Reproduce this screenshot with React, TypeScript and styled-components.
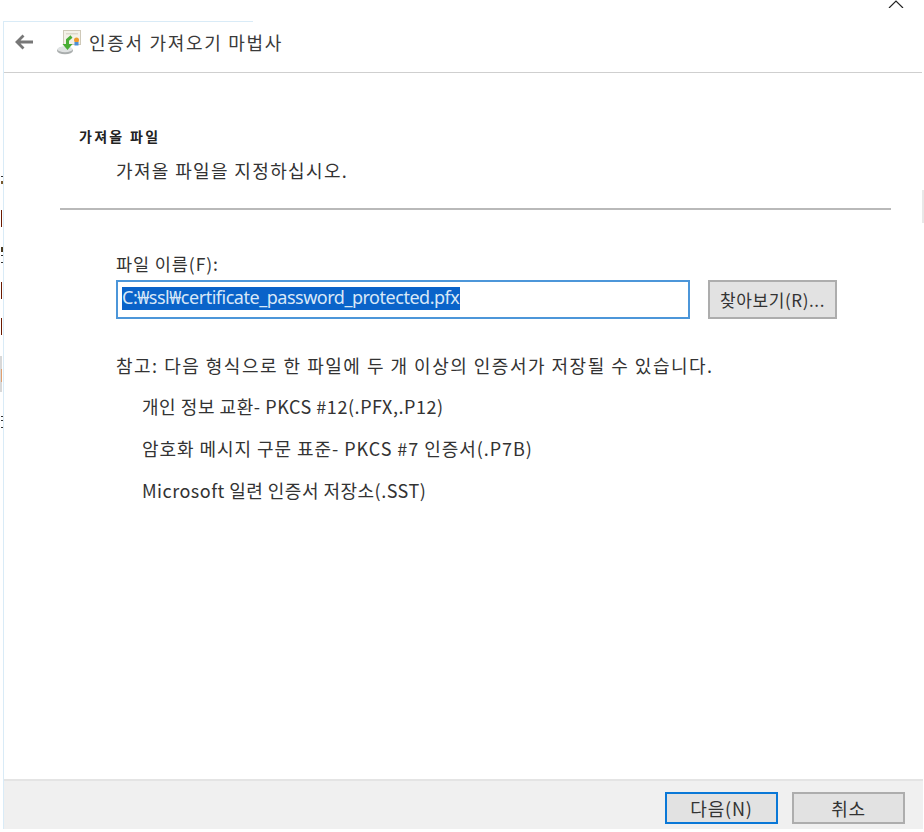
import React from 'react';
import styled, { createGlobalStyle } from 'styled-components';

const GlobalStyle = createGlobalStyle`
	html, body {
		margin: 0;
		padding: 0;
		background: #ffffff;
	}
	body {
		font-family: "Noto Sans CJK KR", "Noto Sans", sans-serif;
		color: #333333;
	}
`;

const Screen = styled.div`
	position: relative;
	width: 924px;
	height: 832px;
	overflow: hidden;
	background: #fff;
`;

const Wizard = styled.div`
	display: flex;
	flex-direction: column;
	width: 918px;
	height: 808px;
	margin: 21px 0 0 3px;
	border-left: 1px solid #d9ebf7;
`;

const TopEdge = styled.div`
	width: 249px;
	height: 1px;
	background: #d9ebf7;
`;

const Header = styled.header`
	display: flex;
	align-items: center;
	flex-shrink: 0;
	height: 40px;
	padding: 0 0 10px 10px;
	border-bottom: 1px solid #cfcfcf;
`;

const BackButton = styled.span`
	display: flex;
	width: 22px;
	height: 18px;
	margin-right: 21px;
`;

const WizardIcon = styled.span`
	display: flex;
	width: 26px;
	height: 26px;
	margin-right: 6px;
`;

const Title = styled.h1`
	margin: 0;
	font-size: 18px;
	font-weight: 400;
	letter-spacing: 1.7px;
	color: #3a3a3a;
`;

const Body = styled.main`
	flex: 1;
	padding: 53px 31px 0 56px;
`;

const SectionTitle = styled.h2`
	margin: 0 0 0 19px;
	font-size: 14px;
	line-height: 20px;
	font-weight: 700;
	letter-spacing: 2.3px;
	color: #222;
`;

const SectionHint = styled.p`
	margin: 12px 0 0 56px;
	font-size: 18px;
	line-height: 24px;
	letter-spacing: 1.36px;
`;

const Divider = styled.hr`
	height: 2px;
	margin: 26px 0 0;
	border: 0;
	background: #b9b9b9;
`;

const FieldLabel = styled.label`
	display: block;
	margin: 43px 0 0 56px;
	font-size: 17.5px;
	line-height: 22px;
	letter-spacing: 0.9px;
`;

const FieldRow = styled.div`
	display: flex;
	align-items: flex-start;
	gap: 18px;
	margin: 5px 0 0 56px;
`;

const PathField = styled.div`
	box-sizing: border-box;
	width: 574px;
	height: 39px;
	padding: 3px 4px;
	border: 2px solid #4c96d9;
`;

const SelectedPath = styled.span`
	display: inline-block;
	height: 23px;
	padding: 0 1px 0 0;
	font-family: "Noto Sans", "Noto Sans CJK KR", sans-serif;
	font-size: 18px;
	line-height: 21px;
	letter-spacing: -0.48px;
	color: #d8e8f8;
	background: #0a63c9;
`;

const DialogButton = styled.button<{ $focused?: boolean }>`
	box-sizing: border-box;
	height: 39px;
	padding: 0;
	font-family: inherit;
	font-size: 17px;
	color: #333;
	background: #e2e2e2;
	border: 2px solid ${(p) => (p.$focused ? '#0a78d7' : '#adadad')};
`;

const BrowseButton = styled(DialogButton)`
	width: 129px;
	letter-spacing: 0.6px;
`;

const Note = styled.p`
	margin: 34px 0 0 56px;
	font-size: 18px;
	line-height: 24px;
	letter-spacing: 1.5px;
`;

const FormatList = styled.ul`
	margin: 8px 0 0 82px;
	padding: 0;
	list-style: none;
`;

const FormatItem = styled.li<{ $spacing: number }>`
	height: 42px;
	font-size: 18px;
	line-height: 42px;
	letter-spacing: ${(p) => p.$spacing}px;
`;

const Footer = styled.footer`
	display: flex;
	justify-content: flex-end;
	align-items: center;
	gap: 14px;
	height: 50px;
	flex-shrink: 0;
	padding: 6px 18px 0 0;
	box-sizing: border-box;
	margin-right: -1px;
	background: #f0f0f0;
	border-top: 2px solid #e4e4e4;
`;

const FooterButton = styled(DialogButton)`
	width: 113px;
	height: 32px;
	font-size: 18px;
	letter-spacing: 0.8px;
`;

const CloseMark = styled.svg`
	position: absolute;
	top: 0;
	left: 887px;
	width: 18px;
	height: 8px;
`;

const StrayMark = styled.i<{ $top: number; $width: number; $height: number; $color: string }>`
	position: absolute;
	left: 1px;
	top: ${(p) => p.$top}px;
	width: ${(p) => p.$width}px;
	height: ${(p) => p.$height}px;
	background: ${(p) => p.$color};
`;

const ScrollStub = styled.i`
	position: absolute;
	left: 0;
	top: 356px;
	width: 2px;
	height: 36px;
	background: #d8d8d8;
`;

const EdgeStub = styled.i`
	position: absolute;
	left: 922px;
	top: 190px;
	width: 2px;
	height: 33px;
	background: #e8e8e8;
`;

const marks = [
	{ top: 176, width: 2, height: 1, color: '#333' },
	{ top: 181, width: 2, height: 3, color: '#7a5a30' },
	{ top: 210, width: 1, height: 17, color: '#6b1a00' },
	{ top: 247, width: 2, height: 5, color: '#4a3a20' },
	{ top: 255, width: 2, height: 1, color: '#333' },
	{ top: 262, width: 2, height: 1, color: '#333' },
	{ top: 282, width: 1, height: 17, color: '#6b1a00' },
	{ top: 318, width: 1, height: 17, color: '#6b1a00' },
	{ top: 369, width: 1, height: 13, color: '#e0a070' },
	{ top: 416, width: 2, height: 1, color: '#333' },
	{ top: 420, width: 2, height: 1, color: '#333' },
	{ top: 427, width: 2, height: 1, color: '#333' },
];

const formats = [
	{ text: '개인 정보 교환- PKCS #12(.PFX,.P12)', spacing: 0.55 },
	{ text: '암호화 메시지 구문 표준- PKCS #7 인증서(.P7B)', spacing: 0.95 },
	{ text: 'Microsoft 일련 인증서 저장소(.SST)', spacing: 0.48 },
];

const App = () => {
	return (
		<Screen>
			<GlobalStyle />
			<CloseMark viewBox="0 0 18 8">
				<path d="M2 8 L9 1 L16 8" fill="none" stroke="#222" strokeWidth="1.2" />
			</CloseMark>
			<ScrollStub />
			{marks.map((m) => (
				<StrayMark key={m.top} $top={m.top} $width={m.width} $height={m.height} $color={m.color} />
			))}
			<EdgeStub />
			<Wizard>
				<TopEdge />
				<Header>
					<BackButton>
						<svg viewBox="0 0 22 18" width="22" height="18">
							<path d="M19 9 H3 M9.5 2.5 L3 9 L9.5 15.5" fill="none" stroke="#777" strokeWidth="2.8" />
						</svg>
					</BackButton>
					<WizardIcon>
						<svg viewBox="0 0 26 26" width="26" height="26">
							<rect x="6.5" y="1.5" width="17" height="14" fill="#f4f1e8" stroke="#cfc9b8" />
							<rect x="9" y="4" width="12" height="1.5" fill="#ddd9cb" />
							<circle cx="19.5" cy="11" r="2.5" fill="#ee9a2c" />
							<rect x="17.5" y="13" width="4" height="3.5" fill="#4d8fd6" />
							<ellipse cx="8" cy="21.5" rx="8" ry="3.8" fill="#a9adad" />
							<ellipse cx="8" cy="20.2" rx="7.5" ry="3" fill="#dfe2e2" />
							<path d="M14.5 7.5 L10.5 11 V16" fill="none" stroke="#49ad35" strokeWidth="3" />
							<path d="M5.5 15 H15.5 L10.5 21 Z" fill="#49ad35" />
						</svg>
					</WizardIcon>
					<Title>인증서 가져오기 마법사</Title>
				</Header>
				<Body>
					<SectionTitle>가져올 파일</SectionTitle>
					<SectionHint>가져올 파일을 지정하십시오.</SectionHint>
					<Divider />
					<FieldLabel>파일 이름(F):</FieldLabel>
					<FieldRow>
						<PathField>
							<SelectedPath>C:₩ssl₩certificate_password_protected.pfx</SelectedPath>
						</PathField>
						<BrowseButton>찾아보기(R)...</BrowseButton>
					</FieldRow>
					<Note>참고: 다음 형식으로 한 파일에 두 개 이상의 인증서가 저장될 수 있습니다.</Note>
					<FormatList>
						{formats.map((f) => (
							<FormatItem key={f.text} $spacing={f.spacing}>
								{f.text}
							</FormatItem>
						))}
					</FormatList>
				</Body>
				<Footer>
					<FooterButton $focused>다음(N)</FooterButton>
					<FooterButton>취소</FooterButton>
				</Footer>
			</Wizard>
		</Screen>
	);
};

export default App;
